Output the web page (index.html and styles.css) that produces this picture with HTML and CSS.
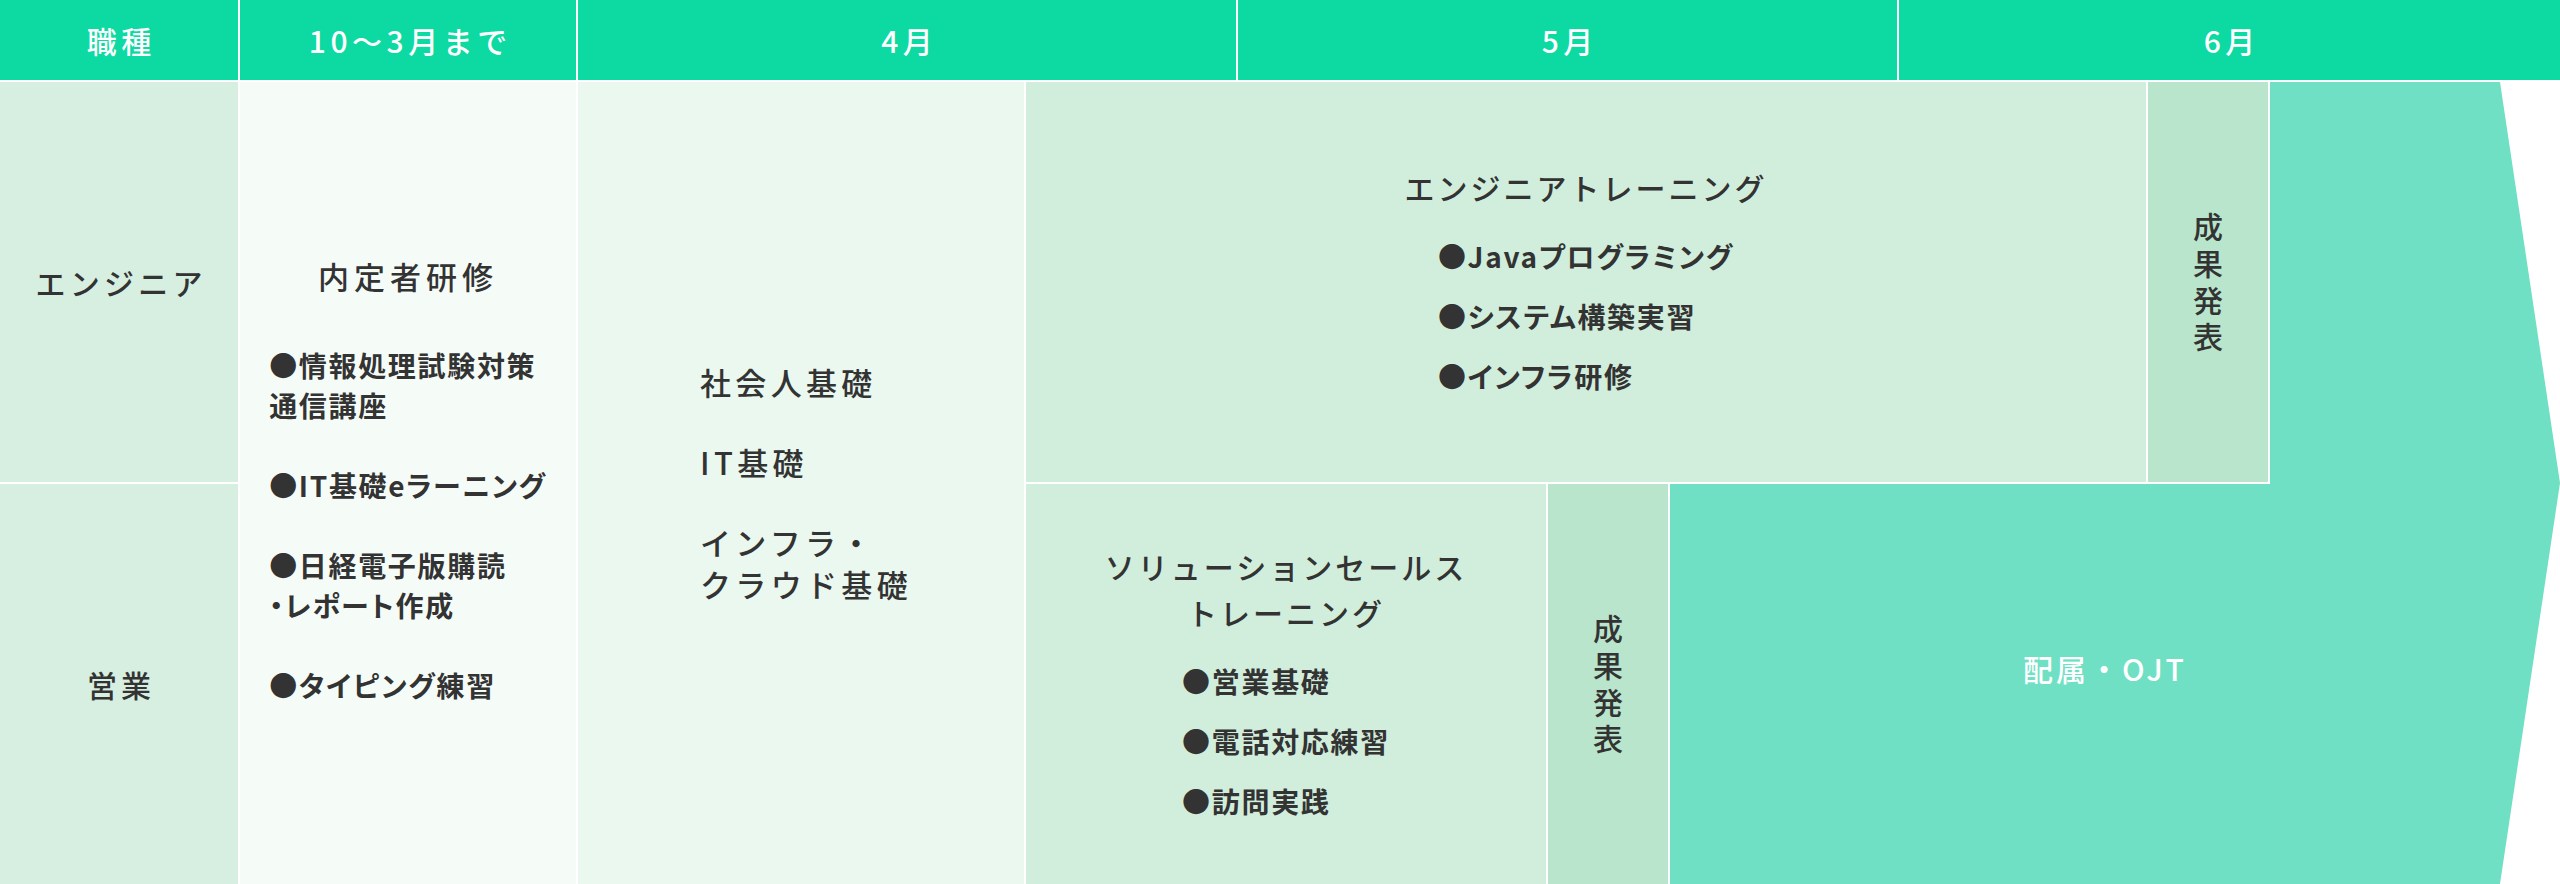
FILE: index.html
```html
<!DOCTYPE html>
<html lang="ja">
<head>
<meta charset="utf-8">
<title>研修スケジュール</title>
<link rel="stylesheet" href="styles.css">
</head>
<body>
<div class="schedule">
  <div class="head">
    <div class="hcell h-role">職種</div>
    <div class="hcell h-pre">10〜3月まで</div>
    <div class="hcell h-month">4月</div>
    <div class="hcell h-month5">5月</div>
    <div class="hcell h-month6">6月</div>
  </div>
  <div class="grid">
    <div class="role role-eng">エンジニア</div>
    <div class="role role-sales">営業</div>

    <div class="cell pre">
      <div class="stack">
        <p class="heading">内定者研修</p>
        <ul class="list list-pre">
          <li>●情報処理試験対策<br>通信講座</li>
          <li>●IT基礎eラーニング</li>
          <li>●日経電子版購読<br>・レポート作成</li>
          <li>●タイピング練習</li>
        </ul>
      </div>
    </div>

    <div class="cell april">
      <ul class="topics">
        <li>社会人基礎</li>
        <li>IT基礎</li>
        <li>インフラ・<br>クラウド基礎</li>
      </ul>
    </div>

    <div class="arrow"></div>
    <div class="arrow-label">配属・OJT</div>

    <div class="cell training eng-training">
      <p class="title">エンジニアトレーニング</p>
      <ul class="list list-training">
        <li>●Javaプログラミング</li>
        <li>●システム構築実習</li>
        <li>●インフラ研修</li>
      </ul>
    </div>
    <div class="cell present eng-present"><span class="vertical">成果発表</span></div>

    <div class="cell training sales-training">
      <p class="title">ソリューションセールス<br>トレーニング</p>
      <ul class="list list-training">
        <li>●営業基礎</li>
        <li>●電話対応練習</li>
        <li>●訪問実践</li>
      </ul>
    </div>
    <div class="cell present sales-present"><span class="vertical">成果発表</span></div>
  </div>
</div>
</body>
</html>
```

FILE: styles.css
```css
* { box-sizing: border-box; }

html, body {
  margin: 0;
  padding: 0;
  background: #ffffff;
}

body {
  width: 2560px;
  height: 884px;
  overflow: hidden;
  font-family: "Noto Sans CJK JP", "Noto Sans", sans-serif;
  color: #333333;
}

p, ul { margin: 0; padding: 0; }
ul { list-style: none; }

.schedule {
  width: 2560px;
  display: flex;
  flex-direction: column;
  gap: 2px;
}

/* header */
.head {
  display: flex;
  gap: 2px;
  height: 80px;
}

.hcell {
  background: #0dd9a3;
  color: #ffffff;
  font-size: 30px;
  font-weight: 500;
  letter-spacing: 0.15em;
  display: flex;
  align-items: center;
  justify-content: center;
  padding-left: 0.15em;
}

.h-role { width: 238px; }
.h-pre { width: 336px; }
.h-month { width: 658px; }
.h-month5 { width: 659px; }
.h-month6 { width: 661px; }

/* body grid */
.grid {
  display: grid;
  grid-template-columns: 238px 336px 446px 520px 120px 476px 120px 290px;
  grid-template-rows: 400px 400px;
  gap: 2px;
}

.cell {
  display: flex;
  flex-direction: column;
  align-items: center;
  justify-content: center;
}

.role {
  background: #d7efe1;
  display: flex;
  align-items: center;
  justify-content: center;
  font-size: 30px;
  font-weight: 500;
  letter-spacing: 0.14em;
  padding-left: 0.14em;
}

.role-eng { grid-column: 1; grid-row: 1; }
.role-sales { grid-column: 1; grid-row: 2; }

.pre {
  grid-column: 2;
  grid-row: 1 / 3;
  background: #f5fcf8;
}

.stack {
  display: flex;
  flex-direction: column;
  align-items: center;
  padding-bottom: 8px;
}

.heading {
  font-size: 31px;
  font-weight: 500;
  letter-spacing: 0.16em;
  line-height: 44px;
  margin-bottom: 47px;
}

.april {
  grid-column: 3;
  grid-row: 1 / 3;
  background: #eaf8ef;
}

.topics {
  font-size: 31px;
  font-weight: 500;
  letter-spacing: 0.14em;
  line-height: 42px;
  display: flex;
  flex-direction: column;
  gap: 38px;
  padding-left: 10px;
}

.list {
  font-size: 28px;
  font-weight: 700;
  letter-spacing: 0.06em;
  line-height: 40px;
  font-feature-settings: "palt";
  display: flex;
  flex-direction: column;
}

.list-pre { gap: 40px; }
.list-training { gap: 20px; }

.training {
  background: #d1eedc;
  padding-bottom: 5px;
}

.eng-training { grid-column: 4 / 7; grid-row: 1; }
.sales-training { grid-column: 4; grid-row: 2; }

.title {
  font-size: 30px;
  font-weight: 500;
  letter-spacing: 0.1em;
  line-height: 46px;
  text-align: center;
  margin-bottom: 26px;
}

.present {
  background: #b8e5cb;
}

.eng-present { grid-column: 7; grid-row: 1; }
.sales-present { grid-column: 5; grid-row: 2; }

.vertical {
  writing-mode: vertical-rl;
  font-size: 30px;
  font-weight: 500;
  letter-spacing: 0.22em;
  padding-top: 0.22em;
}

/* arrow covering the lower-right of row 2 and the right of row 1 */
.arrow {
  grid-column: 6 / 9;
  grid-row: 1 / 3;
  background: #70e0c4;
  clip-path: polygon(0 402px, 600px 402px, 600px 0, 830px 0, 100% 50%, 830px 100%, 0 100%);
}

.arrow-label {
  grid-column: 6 / 9;
  grid-row: 2;
  position: relative;
  z-index: 1;
  display: flex;
  align-items: center;
  justify-content: center;
  padding-bottom: 32px;
  padding-right: 20px;
  color: #ffffff;
  font-size: 30px;
  font-weight: 500;
  letter-spacing: 0.1em;
}
```
